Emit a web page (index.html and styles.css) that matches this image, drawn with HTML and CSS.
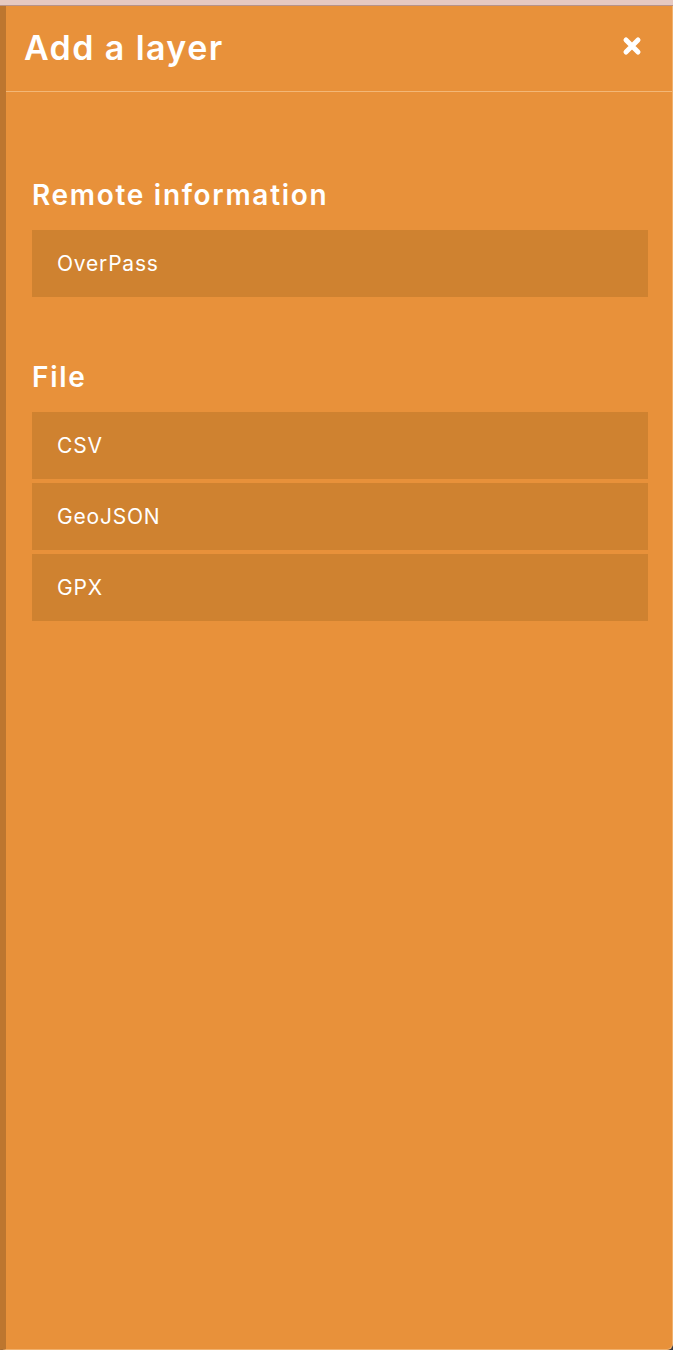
FILE: index.html
```html
<!DOCTYPE html>
<html lang="en">
<head>
  <meta charset="UTF-8">
  <title>Add a layer</title>
  <link rel="stylesheet" href="styles.css">
</head>
<body>
  <div class="top-strip"></div>
  <div class="panel">
    <div class="panel-header">
      <h1>Add a layer</h1>
      <button class="close" title="Close">
        <svg width="20" height="20" viewBox="0 0 20 20">
          <path d="M4 4 L16 16 M16 4 L4 16" stroke="#fff" stroke-width="5" stroke-linecap="round"/>
        </svg>
      </button>
    </div>

    <div class="panel-body">
      <h2>Remote information</h2>
      <ul class="layer-list">
        <li>OverPass</li>
      </ul>

      <h2>File</h2>
      <ul class="layer-list">
        <li>CSV</li>
        <li>GeoJSON</li>
        <li>GPX</li>
      </ul>
    </div>
  </div>
</body>
</html>
```

FILE: styles.css
```css
html, body {
  height: 100%;
}

body {
  margin: 0;
  font-family: Inter, "Liberation Sans", Arial, sans-serif;
  background-color: #3b3a40;
  color: #fff;
  display: flex;
  flex-direction: column;
}

.top-strip {
  height: 5px;
  background-color: #e6c9c1;
  border-bottom: 1px solid #b8938a;
  flex: none;
}

.panel {
  flex: 1;
  background-color: #e8913a;
  border-left: 6px solid #bd762f;
  border-right: 1px solid #f0b06c;
  border-bottom: 1px solid #f0b06c;
  border-bottom-right-radius: 6px;
}

.panel-header {
  display: flex;
  align-items: center;
  justify-content: space-between;
  height: 85px;
  padding: 0 30px 0 18px;
  border-bottom: 1px solid #f3b776;
}

.panel-header h1 {
  margin: 0 0 2px 0;
  font-size: 34px;
  font-weight: 600;
  letter-spacing: 1.4px;
}

.close {
  background: none;
  border: none;
  padding: 0;
  margin-bottom: 6px;
  cursor: pointer;
  display: flex;
}

.panel-body {
  padding: 88px 24px 0 26px;
}

h2 {
  margin: 0 0 20px 0;
  font-size: 28px;
  font-weight: 600;
  line-height: 30px;
  letter-spacing: 1.7px;
}

.layer-list {
  list-style: none;
  margin: 0 0 65px 0;
  padding: 0;
}

.layer-list li {
  background-color: #cf8230;
  height: 67px;
  line-height: 67px;
  padding-left: 25px;
  margin-bottom: 4px;
  font-size: 21px;
  letter-spacing: 0.8px;
  cursor: pointer;
}
```
